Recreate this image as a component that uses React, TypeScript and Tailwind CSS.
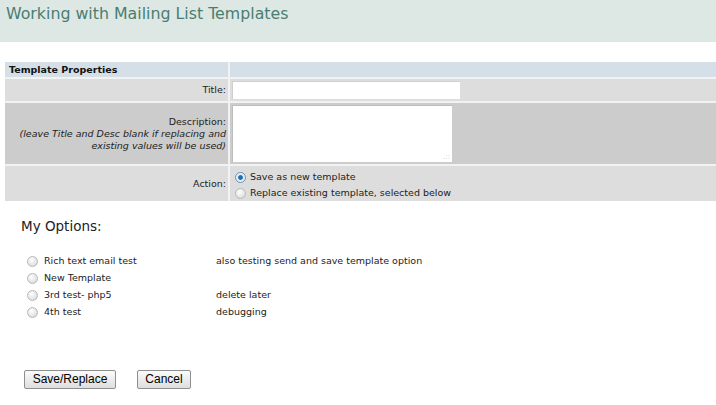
import React, { useState } from "react";

const options = [
  { name: "Rich text email test", desc: "also testing send and save template option" },
  { name: "New Template", desc: "" },
  { name: "3rd test- php5", desc: "delete later" },
  { name: "4th test", desc: "debugging" },
];

function Radio({ checked }: { checked?: boolean }) {
  return (
    <span
      className={`inline-block w-[11px] h-[11px] rounded-full border shrink-0 ${
        checked
          ? "border-[#6f8fa8] bg-[radial-gradient(circle,#1f6fb5_0,#1f6fb5_30%,#dfe9f2_45%,#ffffff_100%)]"
          : "border-[#b9b9b9] bg-[radial-gradient(circle_at_40%_35%,#ffffff_0,#e4e4e4_60%,#cfcfcf_100%)]"
      }`}
    />
  );
}

export default function App() {
  const [action] = useState<"new" | "replace">("new");

  return (
    <div className="w-[716px] h-[405px] bg-white overflow-hidden font-['DejaVu_Sans',Verdana,sans-serif] text-[9.5px] text-[#222]">
      <div className="h-[42px] bg-[#dde8e4] pl-[6px] pt-[3px]">
        <h1 className="text-[15.8px] leading-[21px] text-[#4a7d71]">Working with Mailing List Templates</h1>
      </div>

      <div className="mt-[20px] ml-[5px] grid grid-cols-[223px_1fr] gap-[2px] bg-[#f2f2f2]">
        <div className="h-[15px] bg-[#d5dfe7] pl-[4px] font-bold leading-[15px] text-[#111]">Template Properties</div>
        <div className="bg-[#d5dfe7]" />

        <div className="h-[22px] bg-[#dddddd] pr-[2px] text-right leading-[22px]">Title:</div>
        <div className="bg-[#dddddd] pl-[2px] pt-[2px]">
          <div className="w-[228px] h-[18px] bg-white border-t border-l border-[#cfcfcf]" />
        </div>

        <div className="h-[61px] bg-[#cccccc] pr-[2px] text-right flex flex-col justify-center leading-[12px]">
          <span>Description:</span>
          <span className="italic">(leave Title and Desc blank if replacing and</span>
          <span className="italic">existing values will be used)</span>
        </div>
        <div className="bg-[#cccccc] pl-[2px] pt-[2px]">
          <div className="relative w-[220px] h-[57px] bg-white border-t border-l border-[#bdbdbd]">
            <span className="absolute right-[2px] bottom-[1px] text-[7px] leading-none text-[#bbbbbb]">.::</span>
          </div>
        </div>

        <div className="h-[35px] bg-[#dddddd] pr-[2px] text-right leading-[35px]">Action:</div>
        <div className="bg-[#dddddd] pl-[5px] pt-[5px] flex flex-col gap-[4px] leading-[12px]">
          <label className="flex items-center gap-[4px]">
            <Radio checked={action === "new"} />
            <span>Save as new template</span>
          </label>
          <label className="flex items-center gap-[4px]">
            <Radio checked={action === "replace"} />
            <span>Replace existing template, selected below</span>
          </label>
        </div>
      </div>

      <h2 className="mt-[16px] ml-[21px] text-[13.5px] leading-[18px] text-[#222]">My Options:</h2>

      <div className="mt-[20px] ml-[27px] flex flex-col gap-[5px] leading-[12px]">
        {options.map((o) => (
          <div key={o.name} className="flex items-center">
            <span className="w-[17px] flex">
              <Radio />
            </span>
            <span className="w-[172px]">{o.name}</span>
            <span>{o.desc}</span>
          </div>
        ))}
      </div>

      <div className="mt-[52px] ml-[24px] flex gap-[21px] font-['Liberation_Sans',Arial,sans-serif] text-[12px] text-black">
        <button className="h-[19px] w-[92px] border border-[#8f8f8f] rounded-[2px] bg-gradient-to-b from-[#fbfbfb] to-[#dedede] leading-[17px]">
          Save/Replace
        </button>
        <button className="h-[19px] w-[54px] border border-[#8f8f8f] rounded-[2px] bg-gradient-to-b from-[#fbfbfb] to-[#dedede] leading-[17px]">
          Cancel
        </button>
      </div>
    </div>
  );
}
